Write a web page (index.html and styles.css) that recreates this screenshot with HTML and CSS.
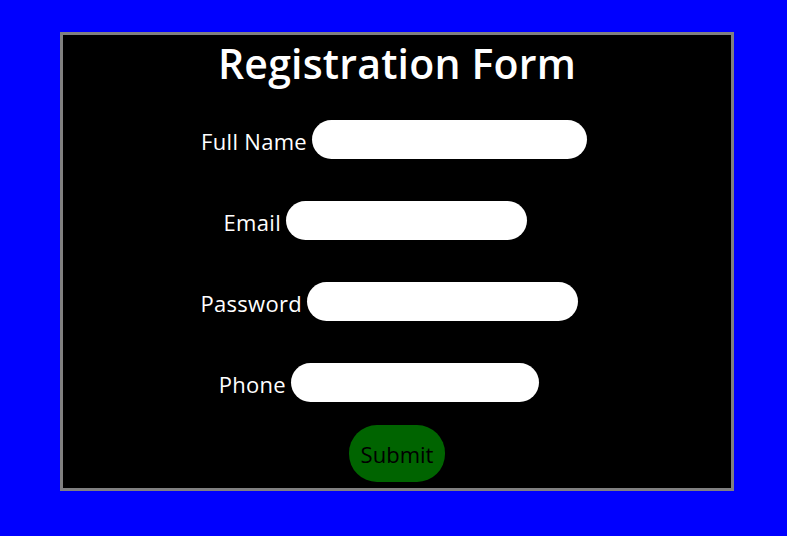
FILE: index.html
```html
<!DOCTYPE html>
<html>
<head>
<meta charset="utf-8">
<link rel="stylesheet" href="styles.css">
</head>
<body>
<div class="card">
  <h1 class="title">Registration Form</h1>
  <form class="form">
    <div class="row">
      <label class="label label-name">Full Name</label>
      <input class="field field-name" type="text">
    </div>
    <div class="row">
      <label class="label label-email">Email</label>
      <input class="field field-email" type="text">
    </div>
    <div class="row">
      <label class="label label-pass">Password</label>
      <input class="field field-pass" type="password">
    </div>
    <div class="row">
      <label class="label label-phone">Phone</label>
      <input class="field field-phone" type="text">
    </div>
    <div class="actions">
      <button class="submit" type="button">Submit</button>
    </div>
  </form>
</div>
</body>
</html>
```
FILE: styles.css
```css
html, body {
  margin: 0;
  padding: 0;
  background: #0000ff;
  font-family: "Open Sans", "Noto Sans", sans-serif;
}
body {
  padding: 32px 0 0 60px;
}
.card {
  box-sizing: border-box;
  width: 674px;
  height: 459px;
  background: #000;
  border: 3px solid #808080;
  display: flex;
  flex-direction: column;
}
.title {
  margin: 0;
  height: 56px;
  line-height: 56px;
  text-align: center;
  color: #fff;
  font-size: 41px;
  font-weight: 600;
  letter-spacing: 0.2px;
  padding-left: 0;
}
.form {
  margin: 29px 0 0 0;
  display: flex;
  flex-direction: column;
  gap: 42px;
}
.row {
  display: flex;
  align-items: center;
  height: 39px;
}
.label {
  box-sizing: border-box;
  flex: 0 0 auto;
  text-align: right;
  padding-right: 5px;
  color: #fff;
  font-size: 22px;
  letter-spacing: 0.3px;
  white-space: nowrap;
  line-height: 30px;
  padding-top: 3px;
}
.label-name { width: 249px; }
.label-email { width: 223px; }
.label-pass { width: 244px; }
.label-phone { width: 228px; }
.field {
  box-sizing: border-box;
  height: 39px;
  border: none;
  border-radius: 20px;
  background: #fff;
  margin: 0;
  padding: 0 14px;
  outline: none;
}
.field-name { width: 275px; }
.field-email { width: 241px; }
.field-pass { width: 271px; }
.field-phone { width: 248px; }
.actions {
  display: flex;
  justify-content: flex-start;
  padding-left: 286px;
  margin-top: -19px;
}
.submit {
  box-sizing: border-box;
  width: 96px;
  height: 57px;
  border: none;
  border-radius: 28px;
  background: #006400;
  color: #000;
  font-family: "Open Sans", "Noto Sans", sans-serif;
  font-size: 22px;
  padding: 0;
}
```
